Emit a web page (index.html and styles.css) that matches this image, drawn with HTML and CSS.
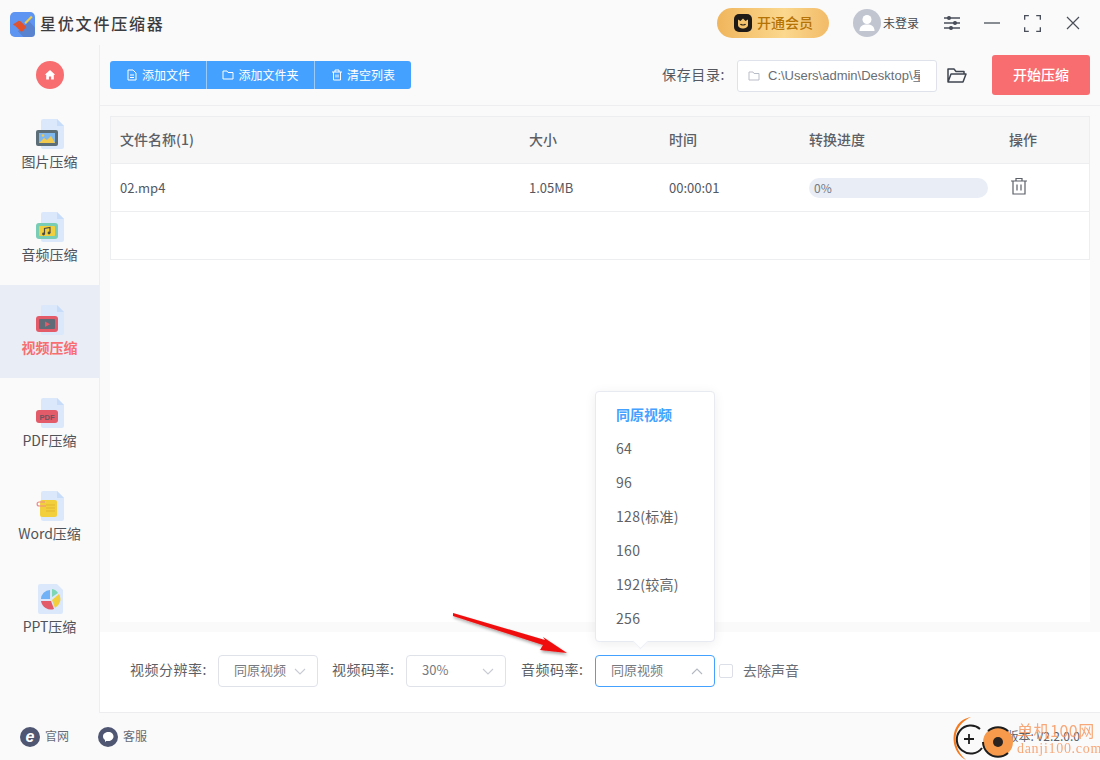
FILE: index.html
```html
<!DOCTYPE html>
<html lang="zh-CN">
<head>
<meta charset="utf-8">
<title>星优文件压缩器</title>
<link rel="stylesheet" href="styles.css">
</head>
<body>
<div class="app">
  <header class="titlebar">
    <div class="brand">
      <svg class="logo" viewBox="0 0 26 26"><rect width="26" height="26" rx="5" fill="#5f95f2"/><path d="M14 26 8 20l12-10 6 6v6a4 4 0 0 1-4 4z" fill="#5a83cf"/><path d="M15 11 22 4l1.500 1.500-7 7z" fill="#f2cb45"/><path d="M11 9.500 17 15.500 12 21 5.500 14.500z" fill="#e2512b"/><path d="M5.500 14.500 3 13l6-4 2 .5z" fill="#e2512b"/></svg>
      <span class="brand-name">星优文件压缩器</span>
    </div>
    <div class="title-right">
      <div class="vip">
        <svg class="vip-icon" viewBox="0 0 18 18"><rect width="18" height="18" rx="5" fill="#1d1a17"/><path d="M4 5.500 6.500 7 9 4.500 11.500 7 14 5.500V11c0 2-2.500 3.500-5 3.500S4 13 4 11z" fill="#f3c36e"/><path d="M6.500 10c.6 1.300 4.400 1.300 5 0" stroke="#1d1a17" stroke-width="1.200" fill="none"/></svg>
        <span class="vip-text">开通会员</span>
      </div>
      <div class="user">
        <svg class="avatar" viewBox="0 0 28 28"><circle cx="14" cy="14" r="14" fill="#c0c5d0"/><circle cx="14" cy="10.500" r="4.500" fill="#fff"/><path d="M6.500 22c0-5 3-6.500 7.500-6.500s7.500 1.500 7.500 6.500z" fill="#fff"/></svg>
        <span>未登录</span>
      </div>
      <svg class="win-btn tune" viewBox="0 0 16 16" fill="none" stroke="#4a4f5a" stroke-width="1.300"><path d="M0 3h16M0 8h16M0 13h16"/><circle cx="5" cy="3" r="1.400" fill="#4a4f5a"/><circle cx="11" cy="8" r="1.400" fill="#4a4f5a"/><circle cx="7" cy="13" r="1.400" fill="#4a4f5a"/></svg>
      <svg class="win-btn min" viewBox="0 0 16 16" fill="none" stroke="#4a4f5a" stroke-width="1.300"><path d="M0 8h16"/></svg>
      <svg class="win-btn max" viewBox="0 0 16 16" fill="none" stroke="#4a4f5a" stroke-width="1.300"><path d="M.6 4.500V.6h4M11.500.6h3.900v3.900M15.400 11.500v3.900h-3.900M4.500 15.400H.6v-3.900"/></svg>
      <svg class="win-btn close" viewBox="0 0 14 14" fill="none" stroke="#4a4f5a" stroke-width="1.200"><path d="m1 1 12 12M13 1 1 13"/></svg>
    </div>
  </header>

  <div class="middle">
    <nav class="sidebar">
      <div class="home-row">
        <div class="home"><svg viewBox="0 0 12 12" class="home-icon"><path d="M6 1 .8 5.800H2.200V10.500H4.900V7.500H7.100V10.500H9.800V5.800H11.200z" fill="#fff"/></svg></div>
      </div>
      <a class="nav-item">
        <svg class="nav-icon" viewBox="0 0 28 30"><path d="M5 2a2 2 0 0 1 2-2h14l7 7v21a2 2 0 0 1-2 2H7a2 2 0 0 1-2-2z" fill="#dbe8fb"/><path d="M21 0l7 7h-7z" fill="#c7dcf8"/><rect x="0" y="11" width="22" height="16" rx="2" fill="#5c6f78"/><rect x="3" y="14" width="16" height="10" fill="#7eb6ee"/><path d="M3 24l5-5 3 2 4-4 4 7z" fill="#f2c94c"/><circle cx="7" cy="16.500" r="1.300" fill="#f2c94c"/></svg>
        <span>图片压缩</span>
      </a>
      <a class="nav-item">
        <svg class="nav-icon" viewBox="0 0 28 30"><path d="M5 2a2 2 0 0 1 2-2h14l7 7v21a2 2 0 0 1-2 2H7a2 2 0 0 1-2-2z" fill="#dbe8fb"/><path d="M21 0l7 7h-7z" fill="#c7dcf8"/><rect x="0" y="11" width="22" height="16" rx="3" fill="#78cdb4"/><rect x="3" y="14" width="16" height="10" rx="1" fill="#f2cf3c"/><path d="M8.500 22.200v-5.700l5.500-1v5.500" stroke="#4b4b44" stroke-width="1.200" fill="none"/><circle cx="7.500" cy="22" r="1.400" fill="#4b4b44"/><circle cx="13" cy="21" r="1.400" fill="#4b4b44"/></svg>
        <span>音频压缩</span>
      </a>
      <a class="nav-item active">
        <svg class="nav-icon" viewBox="0 0 28 30"><path d="M5 2a2 2 0 0 1 2-2h14l7 7v21a2 2 0 0 1-2 2H7a2 2 0 0 1-2-2z" fill="#dbe8fb"/><path d="M21 0l7 7h-7z" fill="#c7dcf8"/><rect x="0" y="11" width="22" height="16" rx="3" fill="#e35a68"/><rect x="3" y="14" width="16" height="10" rx="1" fill="#5f6b76"/><path d="M9 16.500v5.500l5-2.750z" fill="#e35a68"/></svg>
        <span>视频压缩</span>
      </a>
      <a class="nav-item">
        <svg class="nav-icon" viewBox="0 0 28 30"><path d="M5 2a2 2 0 0 1 2-2h14l7 7v21a2 2 0 0 1-2 2H7a2 2 0 0 1-2-2z" fill="#dbe8fb"/><path d="M21 0l7 7h-7z" fill="#c7dcf8"/><rect x="0" y="12" width="22" height="13" rx="3" fill="#e35a68"/><text x="11" y="21.500" class="pdf-text">PDF</text></svg>
        <span>PDF压缩</span>
      </a>
      <a class="nav-item">
        <svg class="nav-icon" viewBox="0 0 28 30"><path d="M5 2a2 2 0 0 1 2-2h14l7 7v21a2 2 0 0 1-2 2H7a2 2 0 0 1-2-2z" fill="#dbe8fb"/><path d="M21 0l7 7h-7z" fill="#c7dcf8"/><rect x="4" y="9" width="17" height="17" rx="2" fill="#f2cf3c"/><path d="M10 14h9M10 17h9M10 20h9" stroke="#e3b52f"/><path d="M9 11H3c-2.500 0-2.500 4 0 4h7" fill="none" stroke="#ee8a8a" stroke-width="1.200"/></svg>
        <span>Word压缩</span>
      </a>
      <a class="nav-item">
        <svg class="nav-icon" viewBox="0 0 28 30"><path d="M2 2a2 2 0 0 1 2-2h17l6 6v22a2 2 0 0 1-2 2H4a2 2 0 0 1-2-2z" fill="#dbe8fb"/><path d="M14 6a9 9 0 0 0-9 9h9z" fill="#70b2f5"/><path d="M16 5a8 8 0 0 1 6 4l-6 4z" fill="#7dd6b6"/><path d="M23 10a10 10 0 0 1-4 14l-3-8z" fill="#f2cf3c"/><path d="M5 17h10l3 8a10 10 0 0 1-13-8z" fill="#e35a68"/></svg>
        <span>PPT压缩</span>
      </a>
    </nav>

    <main class="content">
      <div class="toolbar">
        <div class="btn-group">
          <button class="tool-btn first"><svg viewBox="0 0 12 12" class="tb-icon"><path d="M2 1h5l3 3v7H2zM4 6h4M4 8.500h4" fill="none" stroke="#fff"/></svg>添加文件</button>
          <button class="tool-btn second"><svg viewBox="0 0 12 12" class="tb-icon"><path d="M1 2h4l1 1.500h5V10H1z" fill="none" stroke="#fff"/></svg>添加文件夹</button>
          <button class="tool-btn third"><svg viewBox="0 0 12 12" class="tb-icon"><path d="M1 3h10M4 3V1h4v2M2.500 3v8h7V3M5 5.500v3M7 5.500v3" fill="none" stroke="#fff"/></svg>清空列表</button>
        </div>
        <div class="save-area">
          <span class="save-label">保存目录:</span>
          <div class="path-input">
            <svg viewBox="0 0 12 12" class="path-icon"><path d="M1 2h4l1 1.500h5V10H1z" fill="none" stroke="#b9bdc8"/></svg>
            <span class="path-text">C:\Users\admin\Desktop\星优文件压缩器</span>
          </div>
          <svg viewBox="0 0 20 17" class="open-folder"><path d="M1 15V2h6l2 2.500h8V7M1 15 4 7h15l-3 8z" fill="none" stroke="#3f4650" stroke-width="1.500" stroke-linejoin="round"/></svg>
          <button class="start-btn">开始压缩</button>
        </div>
      </div>

      <section class="list-panel">
        <div class="table-row head">
          <div class="col-name">文件名称(1)</div>
          <div class="col-size">大小</div>
          <div class="col-time">时间</div>
          <div class="col-prog">转换进度</div>
          <div class="col-act">操作</div>
        </div>
        <div class="table-row body-row">
          <div class="col-name">02.mp4</div>
          <div class="col-size">1.05MB</div>
          <div class="col-time">00:00:01</div>
          <div class="col-prog"><div class="progress">0%</div></div>
          <div class="col-act"><svg viewBox="0 0 18 18" class="trash"><path d="M1 4h16M6 4V1.500h6V4M3 4v13h12V4M7 7.500v6M11 7.500v6" fill="none" stroke="#5a5f68" stroke-width="1.200"/></svg></div>
        </div>
        <div class="table-row empty-row"></div>
      </section>

      <section class="settings">
        <label class="field-label first-label">视频分辨率:</label>
        <div class="select w100"><span class="select-value">同原视频</span><svg viewBox="0 0 12 7" class="chev"><path d="m1 1 5 5 5-5" fill="none" stroke="#c8cbd3" stroke-width="1.100"/></svg></div>
        <label class="field-label gap-label">视频码率:</label>
        <div class="select w100 pct"><span class="select-value">30%</span><svg viewBox="0 0 12 7" class="chev"><path d="m1 1 5 5 5-5" fill="none" stroke="#c8cbd3" stroke-width="1.100"/></svg></div>
        <label class="field-label gap-label audio-label">音频码率:</label>
        <div class="select open w120">
          <span class="select-value">同原视频</span><svg viewBox="0 0 12 7" class="chev"><path d="m1 6 5-5 5 5" fill="none" stroke="#b4b8c2" stroke-width="1.100"/></svg>
          <ul class="dropdown">
            <li class="selected">同原视频</li>
            <li>64</li>
            <li>96</li>
            <li>128(标准)</li>
            <li>160</li>
            <li>192(较高)</li>
            <li>256</li>
          </ul>
        </div>
        <span class="checkbox"></span>
        <span class="check-label">去除声音</span>
      </section>
    </main>
  </div>

  <footer class="footer">
    <div class="foot-links">
      <a class="foot-link"><svg viewBox="0 0 20 20" class="foot-icon"><circle cx="10" cy="10" r="10" fill="#4f5672"/><text x="10" y="15" class="ie-text">e</text></svg><span>官网</span></a>
      <a class="foot-link"><svg viewBox="0 0 20 20" class="foot-icon"><circle cx="10" cy="10" r="10" fill="#4f5672"/><path d="M5 9.500C5 6.500 7.500 5 10.500 5S15.500 7 15.500 9.500 13 14 10.500 14H8l-1 1.200V13C5.800 12 5 11 5 9.500z" fill="#fff"/></svg><span>客服</span></a>
    </div>
    <span class="version">版本: V2.2.0.0</span>
  </footer>

  <svg class="arrow" viewBox="0 0 116 46"><defs><filter id="sh" x="-10%" y="-30%" width="120%" height="170%"><feDropShadow dx="1" dy="2" stdDeviation="1.500" flood-color="#000" flood-opacity=".35"/></filter></defs><path d="M0 1 92 28 90 25 114 41 87 38 90 33 0 4z" fill="#f00a0a" filter="url(#sh)"/></svg>

  <div class="watermark">
    <svg class="wm-logo" viewBox="0 0 66 46"><path d="M16 43C4 37 0 20 7 9c3-5 8-8 14-9-8 4-13 9-15 17-2 10 3 20 10 26z" fill="#f47a1f"/><path d="M30 12a14 14 0 1 0 2 19" fill="none" stroke="#1d1d1d" stroke-width="2"/><path d="M14 22h10M19 17v10" stroke="#1d1d1d" stroke-width="1.800"/><circle cx="48" cy="25" r="15" fill="#f79a4b"/><path d="M38 14a15 15 0 0 1 20 0M33 25a15 15 0 0 0 5 11M58 36a15 15 0 0 1-20 0" fill="none" stroke="#1d1d1d" stroke-width="2"/><circle cx="48" cy="25" r="5" fill="#2a2320"/></svg>
    <div class="wm-text"><span class="wm-cn">单机100网</span><span class="wm-en">danji100.com</span></div>
  </div>
</div>
</body>
</html>
```
FILE: styles.css
```css
* { box-sizing: border-box; }
html, body { margin: 0; padding: 0; }
body {
  width: 1100px; height: 760px; overflow: hidden;
  font-family: "Noto Sans CJK SC", "Noto Sans", sans-serif;
  color: #55585f; background: #fafafa; font-size: 13px;
}
.app { position: relative; width: 1100px; height: 760px; display: flex; flex-direction: column; }

/* title bar */
.titlebar { height: 45px; flex: none; display: flex; align-items: center; justify-content: space-between; padding: 0 20px 0 10px; }
.brand { display: flex; align-items: center; gap: 5px; margin-top: 3px; }
.logo { width: 25px; height: 25px; }
.brand-name { font-size: 16px; font-weight: 500; letter-spacing: 1.800px; color: #3a3c40; line-height: 22px; padding-bottom: 3px; }
.title-right { display: flex; align-items: center; margin-top: 1px; }
.vip {
  width: 112px; height: 30px; border-radius: 15px; display: flex; align-items: center; gap: 5px; padding-left: 17px;
  background: linear-gradient(90deg, #f0b55c, #fbd88e 60%, #f2bb68);
  color: #b57306; font-size: 14px; font-weight: 500;
}
.vip-text { padding-bottom: 3px; }
.vip-icon { width: 18px; height: 18px; }
.user { display: flex; align-items: center; margin-left: 24px; font-size: 12px; color: #45484e; gap: 2px; }
.user span { padding-bottom: 1px; }
.avatar { width: 28px; height: 28px; }
.win-btn { display: block; }
.tune { width: 16px; height: 16px; margin-left: 25px; }
.min { width: 16px; height: 16px; margin-left: 24px; }
.max { width: 17px; height: 17px; margin-left: 24px; }
.close { width: 14px; height: 14px; margin-left: 25px; }

.middle { flex: 1; display: flex; min-height: 0; }

/* sidebar */
.sidebar { width: 100px; flex: none; border-right: 1px solid #eeeef0; }
.home-row { height: 54px; display: flex; justify-content: center; padding-top: 16px; }
.home { width: 28px; height: 28px; border-radius: 50%; background: #f76d70; display: flex; align-items: center; justify-content: center; }
.home-icon { width: 12px; height: 12px; }
.nav-item { height: 93px; display: flex; flex-direction: column; align-items: center; padding-top: 20px; font-size: 14px; color: #505359; line-height: 20px; }
.nav-icon { width: 28px; height: 30px; margin-bottom: 2px; }
.nav-item.active { background: #e9edf6; color: #f76d70; font-weight: 700; }
.pdf-text { font: 700 7.500px "Liberation Sans", sans-serif; fill: #6b5560; text-anchor: middle; }

/* main */
.content { flex: 1; min-width: 0; display: flex; flex-direction: column; }
.toolbar { height: 61px; flex: none; border-bottom: 1px solid #eeeef0; display: flex; justify-content: space-between; padding: 0 10px; }
.btn-group { display: flex; height: 28px; margin-top: 16px; background: #45a1ff; border-radius: 3px; }
.tool-btn {
  border: 0; background: none; color: #fff; font: 12px/28px "Noto Sans CJK SC", sans-serif; padding: 0;
  display: flex; align-items: center; justify-content: center; gap: 4px; height: 28px;
}
.tool-btn.first { width: 96px; }
.tool-btn.second { width: 109px; border-left: 1px solid #9bcbfb; border-right: 1px solid #9bcbfb; }
.tool-btn.third { width: 96px; }
.tb-icon { width: 12px; height: 12px; }
.save-area { display: flex; align-items: flex-start; }
.save-label { margin-top: 19px; font-size: 14px; line-height: 20px; color: #55585f; letter-spacing: .6px; }
.path-input {
  width: 200px; height: 32px; margin: 15px 0 0 12px; border: 1px solid #dfe2ea; border-radius: 3px; background: #fff;
  display: flex; align-items: center; padding: 0 16px 0 10px; gap: 8px; overflow: hidden;
}
.path-icon { width: 12px; height: 12px; flex: none; }
.path-text { font: 13px/16px "Liberation Sans", "Noto Sans CJK SC", sans-serif; color: #6a6d74; white-space: nowrap; overflow: hidden; }
.open-folder { width: 20px; height: 17px; margin: 22px 0 0 10px; }
.start-btn {
  width: 98px; height: 40px; margin: 10px 0 0 25px; border: 0; border-radius: 3px; background: #f76d70; color: #fff;
  font: 500 14px/20px "Noto Sans CJK SC", sans-serif; padding: 0 0 2px;
}

/* table */
.list-panel { margin: 10px 10px 0; height: 506px; flex: none; background: #fff; }
.table-row { display: flex; align-items: center; height: 48px; border: 1px solid #eceef0; border-top: 0; font-size: 13px; }
.table-row.head { height: 48px; border-top: 1px solid #eceef0; background: #f7f7f8; font-weight: 500; color: #5c5f65; font-size: 14px; padding-bottom: 2px; }
.col-name { width: 418px; padding-left: 9px; }
.col-size { width: 140px; }
.col-time { width: 140px; }
.col-prog { width: 200px; }
.col-act { width: 80px; }
.progress { width: 179px; height: 20px; border-radius: 10px; background: #e9edf5; font-size: 12px; line-height: 20px; padding-left: 5px; color: #777a80; }
.trash { width: 18px; height: 18px; display: block; margin: -4px 0 0 1px; }

/* settings */
.settings { margin-top: 10px; height: 81px; flex: none; background: #fff; display: flex; align-items: center; padding: 0 0 2px 30px; border-bottom: 1px solid #ededef; }
.field-label { font-size: 14px; color: #5c5f65; letter-spacing: .5px; padding-bottom: 4px; white-space: nowrap; }
.first-label { width: 88px; }
.gap-label { margin-left: 14px; width: 74px; }
.audio-label { margin-left: 15px; }
.select {
  position: relative; height: 32px; border: 1px solid #e0e2ea; border-radius: 4px; background: #fff;
  display: flex; align-items: center; justify-content: space-between; padding: 0 11px 0 15px; font-size: 13px; color: #777a80;
}
.select-value { padding-bottom: 4px; }
.w100 { width: 100px; }
.pct { padding-right: 11px; }
.w120 { width: 120px; margin-left: 0; }
.select.open { border-color: #45a1ff; }
.chev { width: 12px; height: 7px; }
.dropdown {
  position: absolute; left: -1px; bottom: 44px; width: 120px; height: 251px; margin: 0; padding: 5px 0; list-style: none;
  background: #fff; border: 1px solid #e8eaf2; border-radius: 4px; box-shadow: 0 2px 12px rgba(0,0,0,.07);
}
.dropdown::after {
  content: ""; position: absolute; left: 39px; bottom: -6px; width: 10px; height: 10px; background: #fff; transform: rotate(45deg);
  border-right: 1px solid #eef0f6; border-bottom: 1px solid #eef0f6;
}
.dropdown li { height: 34px; line-height: 34px; padding-left: 20px; font-size: 14px; color: #606266; letter-spacing: .3px; }
.dropdown li.selected { color: #45a1ff; font-weight: 700; letter-spacing: 0; }
.checkbox { width: 14px; height: 14px; margin-left: 4px; border: 1px solid #dcdfe8; border-radius: 2px; background: #fff; }
.check-label { margin-left: 10px; font-size: 14px; color: #6a6d74; padding-bottom: 3px; }

/* footer */
.footer { position: absolute; left: 0; right: 0; bottom: 0; height: 47px; display: flex; align-items: center; justify-content: space-between; padding: 0 20px 0 20px; background: #fafafb; font-size: 12px; }
.foot-links { display: flex; gap: 29px; }
.foot-link { display: flex; align-items: center; gap: 5px; color: #666a74; }
.foot-link span { padding-bottom: 3px; }
.foot-icon { width: 20px; height: 20px; }
.ie-text { font: 700 italic 16px "Liberation Sans", sans-serif; fill: #fff; text-anchor: middle; }
.version { color: #5c5f65; font: 12px "Noto Sans CJK SC", sans-serif; padding-bottom: 3px; }

/* overlays */
.arrow { position: absolute; left: 453px; top: 612px; width: 116px; height: 46px; overflow: visible; }
.watermark { position: absolute; left: 950px; top: 717px; display: flex; }
.wm-logo { width: 66px; height: 46px; flex: none; overflow: hidden; }
.wm-text { position: absolute; left: 67px; top: 3px; width: 90px; display: flex; flex-direction: column; align-items: flex-start; color: #f79a62; white-space: nowrap; }
.wm-cn { font: 16px/20px "Noto Sans CJK SC", sans-serif; letter-spacing: .5px; opacity: .85; }
.wm-en { font: 14px/18px "Liberation Serif", serif; letter-spacing: .7px; opacity: .85; }
```
